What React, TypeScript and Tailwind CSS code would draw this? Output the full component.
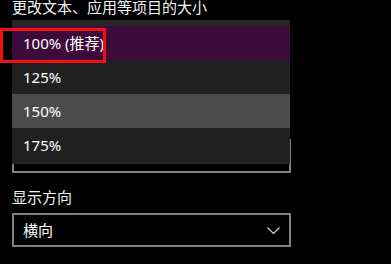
const options = [
  { label: "100% (推荐)", selected: true },
  { label: "125%" },
  { label: "150%", hover: true },
  { label: "175%" },
]

function Chevron() {
  return (
    <svg width="13" height="7" viewBox="0 0 13 7" fill="none">
      <path d="M0.5 0.5 L6.5 6.5 L12.5 0.5" stroke="#d0d0d0" strokeWidth="1.2" />
    </svg>
  )
}

export default function App() {
  return (
    <div
      className="relative w-[391px] h-[264px] overflow-hidden bg-black text-white px-[12px]"
      style={{ fontFamily: '"Noto Sans", "Noto Sans CJK SC", sans-serif' }}
    >
      {/* Section title (cut off at the top) */}
      <div className="-mt-[3px] text-[15px] leading-[20px] whitespace-nowrap text-[#f2f2f2]">
        更改文本、应用等项目的大小
      </div>

      {/* Open combobox: popup over the field */}
      <div className="relative mt-[3px] w-[278px]">
        <div className="absolute left-0 -bottom-[9px] h-[34px] w-[279px] border-2 border-[#808080]" />
        <div className="relative z-10 bg-[#262626] pt-[6px] pb-[2px]">
          {options.map((o) => (
            <div
              key={o.label}
              className={
                "h-[34px] flex items-center pl-[11px] text-[15px] " +
                (o.selected ? "bg-[#3d0a3b]" : o.hover ? "bg-[#4b4b4b]" : "bg-[#202020]")
              }
            >
              {o.label}
            </div>
          ))}
        </div>
      </div>

      {/* Orientation */}
      <div className="mt-[23px] text-[15px] leading-[20px] text-[#f2f2f2]">显示方向</div>
      <div className="mt-[6px] h-[34px] w-[279px] border-2 border-[#808080] flex items-center justify-between pl-[9px] pr-[9px]">
        <span className="text-[15px] leading-[20px]">横向</span>
        <Chevron />
      </div>

      {/* Red annotation box */}
      <div className="absolute z-20 left-0 top-[28px] w-[106px] h-[35px] border-[3px] border-[#f01010]" />
    </div>
  )
}
